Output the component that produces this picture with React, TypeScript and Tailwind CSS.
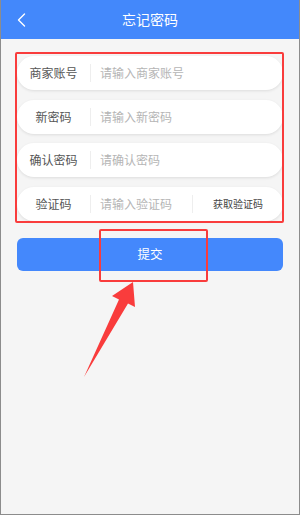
import React from "react"

const fields = [
  { label: "商家账号", placeholder: "请输入商家账号" },
  { label: "新密码", placeholder: "请输入新密码" },
  { label: "确认密码", placeholder: "请确认密码" },
  { label: "验证码", placeholder: "请输入验证码", code: true },
]

export default function App() {
  return (
    <div
      className="relative w-[300px] h-[515px] bg-[#f5f5f5] border-l border-r border-b border-[#8c8c8c] overflow-hidden"
      style={{ fontFamily: '"Noto Sans CJK SC", "Noto Sans", sans-serif' }}
    >
      {/* header */}
      <div className="h-[39px] bg-[#4388fb] flex items-center relative">
        <svg className="absolute left-[16px] top-[13px] w-[9px] h-[14px]" viewBox="0 0 9 14" fill="none">
          <path d="M7.5 1 L1.5 7 L7.5 13" stroke="#fff" strokeWidth={1.4} strokeLinecap="round" strokeLinejoin="round" />
        </svg>
        <p className="w-full text-center text-white text-[14px] leading-none -mt-[1px]">忘记密码</p>
      </div>

      {/* form */}
      <div className="relative px-[16px] pt-[17px] flex flex-col gap-[9.5px]">
        {fields.map((f) => (
          <div
            key={f.label}
            className="h-[34px] bg-white rounded-full flex items-center shadow-[0_1px_3px_rgba(0,0,0,0.1)]"
          >
            <span className="w-[73px] text-center text-[12px] text-[#555]">{f.label}</span>
            <div className="w-px h-[18px] bg-[#eeeeee]" />
            <span className="flex-1 pl-[9px] text-[12px] text-[#b5b5b5]">{f.placeholder}</span>
            {f.code && (
              <>
                <div className="w-px h-[18px] bg-[#eeeeee]" />
                <span className="w-[90px] text-center text-[10px] text-[#444]">获取验证码</span>
              </>
            )}
          </div>
        ))}
        <div className="absolute left-[14px] right-[15px] top-[13px] -bottom-[2px] border-2 border-[#f93c3c] rounded-[2px] pointer-events-none" />
      </div>

      {/* submit */}
      <div className="px-[16px] mt-[17px]">
        <button className="w-full h-[33px] rounded-[6px] bg-[#4488fc] text-white text-[12.5px]">提交</button>
      </div>

      {/* annotation */}
      <div className="absolute left-[98px] top-[229px] w-[109px] h-[53px] border-2 border-[#f93c3c] rounded-[2px] pointer-events-none" />
      <svg className="absolute left-0 top-0 pointer-events-none" width="300" height="515" viewBox="0 0 300 515">
        <polygon points="132,282 134,307 127,303.5 83,377 118,299.5 111,296" fill="#f93c3c" />
      </svg>
    </div>
  )
}
